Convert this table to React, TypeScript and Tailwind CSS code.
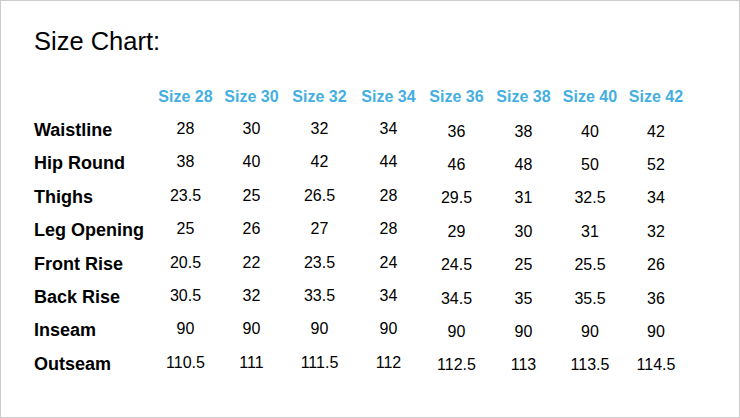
const sizes = [28, 30, 32, 34, 36, 38, 40, 42];

const rows: { label: string; values: string[] }[] = [
  { label: 'Waistline', values: ['28', '30', '32', '34', '36', '38', '40', '42'] },
  { label: 'Hip Round', values: ['38', '40', '42', '44', '46', '48', '50', '52'] },
  { label: 'Thighs', values: ['23.5', '25', '26.5', '28', '29.5', '31', '32.5', '34'] },
  { label: 'Leg Opening', values: ['25', '26', '27', '28', '29', '30', '31', '32'] },
  { label: 'Front Rise', values: ['20.5', '22', '23.5', '24', '24.5', '25', '25.5', '26'] },
  { label: 'Back Rise', values: ['30.5', '32', '33.5', '34', '34.5', '35', '35.5', '36'] },
  { label: 'Inseam', values: ['90', '90', '90', '90', '90', '90', '90', '90'] },
  { label: 'Outseam', values: ['110.5', '111', '111.5', '112', '112.5', '113', '113.5', '114.5'] },
];

export default function App() {
  return (
    <div className="w-[740px] h-[418px] border border-[#cccccc] bg-white pt-[28px] pl-[33px] font-['Liberation_Sans',Arial,sans-serif] text-black">
      <h1 className="text-[25.5px] leading-none mb-[26px]">Size Chart:</h1>

      <div className="grid grid-cols-[119px_65px_67px_69px_69px_67px_67px_66px_66px] auto-rows-[33.4px]">
        <div />
        {sizes.map((s) => (
          <div
            key={s}
            className="flex items-center justify-center text-[16px] font-bold text-[#44afe0] whitespace-nowrap"
          >
            Size {s}
          </div>
        ))}

        {rows.map((row) => (
          <div key={row.label} className="contents">
            <div className="flex items-center text-[18px] font-bold whitespace-nowrap">
              {row.label}
            </div>
            {row.values.map((v, i) => (
              <div
                key={i}
                className={`flex items-center justify-center text-[16px] ${
                  i < 4 ? 'pb-[3px]' : 'pt-[2px]'
                }`}
              >
                {v}
              </div>
            ))}
          </div>
        ))}
      </div>
    </div>
  );
}
